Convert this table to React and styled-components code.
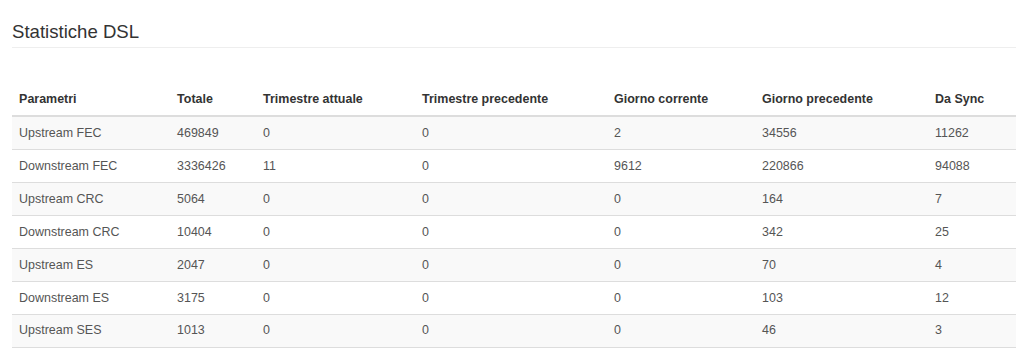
import React from 'react';
import styled, { createGlobalStyle } from 'styled-components';

const GlobalStyle = createGlobalStyle`
  body {
    margin: 0;
    background: #fff;
    font-family: "Liberation Sans", Arial, Helvetica, sans-serif;
    color: #333;
  }
`;

// page wrapper
const Page = styled.div`
  padding: 21.5px 8px 0 12px;
`;

// title with the thin rule under it
const PageHeader = styled.h3`
  margin: 0 0 35.5px;
  padding-bottom: 5px;
  border-bottom: 1px solid #eee;
  font-size: 18.6px;
  line-height: 20.5px;
  font-weight: 400;
  color: #333;
`;

const Table = styled.table`
  width: 100%;
  border-collapse: collapse;
  border-spacing: 0;
  table-layout: fixed;
  font-size: 12.46px;
  line-height: 17.8px;
`;

const Col = styled.col`
  width: ${p => p.$w}px;
`;

const Th = styled.th`
  padding: 7.1px;
  text-align: left;
  font-weight: 700;
  color: #333;
  border-bottom: 2px solid #ddd;
  white-space: nowrap;
`;

const Row = styled.tr`
  background: ${p => (p.$striped ? '#f9f9f9' : '#fff')};
`;

const Td = styled.td`
  padding: 7.1px;
  color: #555;
  border-bottom: 1px solid #ddd;
  white-space: nowrap;
`;

const columns = [
  { label: 'Parametri', w: 158 },
  { label: 'Totale', w: 86 },
  { label: 'Trimestre attuale', w: 159 },
  { label: 'Trimestre precedente', w: 192 },
  { label: 'Giorno corrente', w: 148 },
  { label: 'Giorno precedente', w: 173 },
  { label: 'Da Sync', w: 88 },
];

const rows = [
  ['Upstream FEC', '469849', '0', '0', '2', '34556', '11262'],
  ['Downstream FEC', '3336426', '11', '0', '9612', '220866', '94088'],
  ['Upstream CRC', '5064', '0', '0', '0', '164', '7'],
  ['Downstream CRC', '10404', '0', '0', '0', '342', '25'],
  ['Upstream ES', '2047', '0', '0', '0', '70', '4'],
  ['Downstream ES', '3175', '0', '0', '0', '103', '12'],
  ['Upstream SES', '1013', '0', '0', '0', '46', '3'],
];

export default function App() {
  return (
    <>
      <GlobalStyle />
      <Page>
        <PageHeader>Statistiche DSL</PageHeader>
        <Table>
          <colgroup>
            {columns.map(c => (
              <Col key={c.label} $w={c.w} />
            ))}
          </colgroup>
          <thead>
            <tr>
              {columns.map(c => (
                <Th key={c.label}>{c.label}</Th>
              ))}
            </tr>
          </thead>
          <tbody>
            {rows.map((r, i) => (
              <Row key={r[0]} $striped={i % 2 === 0}>
                {r.map((v, j) => (
                  <Td key={j}>{v}</Td>
                ))}
              </Row>
            ))}
          </tbody>
        </Table>
      </Page>
    </>
  );
}
